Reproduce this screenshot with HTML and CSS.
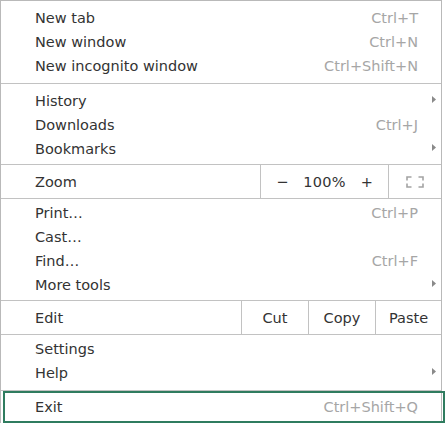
FILE: index.html
```html
<!DOCTYPE html>
<html lang="en">
<head>
<meta charset="utf-8">
<title>Menu</title>
<link rel="stylesheet" href="styles.css">
</head>
<body>
<div class="menu">
  <div class="group g1">
    <div class="item"><span class="label">New tab</span><span class="key">Ctrl+T</span><span class="sub"></span></div>
    <div class="item"><span class="label">New window</span><span class="key">Ctrl+N</span><span class="sub"></span></div>
    <div class="item"><span class="label">New incognito window</span><span class="key">Ctrl+Shift+N</span><span class="sub"></span></div>
  </div>
  <div class="group g2">
    <div class="item"><span class="label">History</span><span class="key"></span><span class="sub"><svg class="arrow" width="4" height="7" viewBox="0 0 4 7"><polygon points="0,0 4,3.5 0,7"/></svg></span></div>
    <div class="item"><span class="label">Downloads</span><span class="key">Ctrl+J</span><span class="sub"></span></div>
    <div class="item"><span class="label">Bookmarks</span><span class="key"></span><span class="sub"><svg class="arrow" width="4" height="7" viewBox="0 0 4 7"><polygon points="0,0 4,3.5 0,7"/></svg></span></div>
  </div>
  <div class="bar zoom">
    <span class="bar-label">Zoom</span>
    <div class="zoomctl"><span class="zbtn">−</span><span class="zval">100%</span><span class="zbtn">+</span></div>
    <div class="fs"><svg width="18" height="12" viewBox="0 0 18 12"><path d="M1 4.5V1H5.5M12.5 1H17V4.5M1 7.5V11H5.5M12.5 11H17V7.5"/></svg></div>
  </div>
  <div class="group g4">
    <div class="item"><span class="label">Print…</span><span class="key">Ctrl+P</span><span class="sub"></span></div>
    <div class="item"><span class="label">Cast…</span><span class="key"></span><span class="sub"></span></div>
    <div class="item"><span class="label">Find…</span><span class="key">Ctrl+F</span><span class="sub"></span></div>
    <div class="item"><span class="label">More tools</span><span class="key"></span><span class="sub"><svg class="arrow" width="4" height="7" viewBox="0 0 4 7"><polygon points="0,0 4,3.5 0,7"/></svg></span></div>
  </div>
  <div class="bar edit">
    <span class="bar-label">Edit</span>
    <span class="ebtn cut">Cut</span>
    <span class="ebtn copy">Copy</span>
    <span class="ebtn paste">Paste</span>
  </div>
  <div class="group g6">
    <div class="item"><span class="label">Settings</span><span class="key"></span><span class="sub"></span></div>
    <div class="item"><span class="label">Help</span><span class="key"></span><span class="sub"><svg class="arrow" width="4" height="7" viewBox="0 0 4 7"><polygon points="0,0 4,3.5 0,7"/></svg></span></div>
  </div>
  <div class="group g7">
    <div class="item exit"><span class="label">Exit</span><span class="key">Ctrl+Shift+Q</span><span class="sub"></span></div>
  </div>
</div>
</body>
</html>
```
FILE: styles.css
```css
html, body {
  margin: 0;
  padding: 0;
  background: #ffffff;
}
body {
  font-family: "DejaVu Sans", "Liberation Sans", sans-serif;
  font-size: 14.5px;
  color: #333333;
}
.menu {
  width: 440px;
  border: 1px solid #b9b9b9;
  border-bottom: none;
  background: #ffffff;
}
.group {
  display: flex;
  flex-direction: column;
}
.group + .group,
.bar + .group,
.group + .bar {
  border-top: 1px solid #c2c2c2;
}
.g1 { padding: 5px 0 5px; }
.g2 { padding: 5px 0 3px; }
.g4 { padding: 2px 0 3px; }
.g6 { padding: 2px 0 5px; }
.g7 { padding: 0; }
.item {
  display: flex;
  align-items: center;
  height: 24px;
  line-height: 24px;
}
.label {
  flex: 1;
  padding-left: 34px;
  white-space: nowrap;
}
.key {
  color: #a6a6a6;
  white-space: nowrap;
}
.sub {
  width: 23px;
  height: 24px;
  display: flex;
  align-items: center;
  justify-content: flex-end;
  padding-right: 5px;
  box-sizing: border-box;
}
.arrow {
  fill: #8a8a8a;
  margin-bottom: 4px;
}
.bar {
  display: flex;
  height: 33px;
  align-items: stretch;
}
.bar-label {
  flex: 1;
  padding-left: 34px;
  display: flex;
  align-items: center;
}
.zoomctl {
  width: 128px;
  box-sizing: border-box;
  border-left: 1px solid #c2c2c2;
  display: flex;
  align-items: center;
  justify-content: center;
  gap: 15px;
}
.zval {
  letter-spacing: 0.2px;
}
.fs {
  width: 53px;
  box-sizing: border-box;
  border-left: 1px solid #c2c2c2;
  display: flex;
  align-items: center;
  justify-content: center;
}
.fs svg path {
  fill: none;
  stroke: #a3a3a3;
  stroke-width: 1.6;
}
.ebtn {
  box-sizing: border-box;
  border-left: 1px solid #c2c2c2;
  display: flex;
  align-items: center;
  justify-content: center;
}
.cut { width: 67px; }
.copy { width: 67px; }
.paste { width: 66px; }
.exit {
  height: 32px;
  box-sizing: border-box;
  border: 2px solid #2f7c5f;
  margin: 0 -4px 0 2px;
}
.exit .label {
  padding-left: 30px;
}
.exit .sub {
  width: 25px;
  height: 28px;
}
```
